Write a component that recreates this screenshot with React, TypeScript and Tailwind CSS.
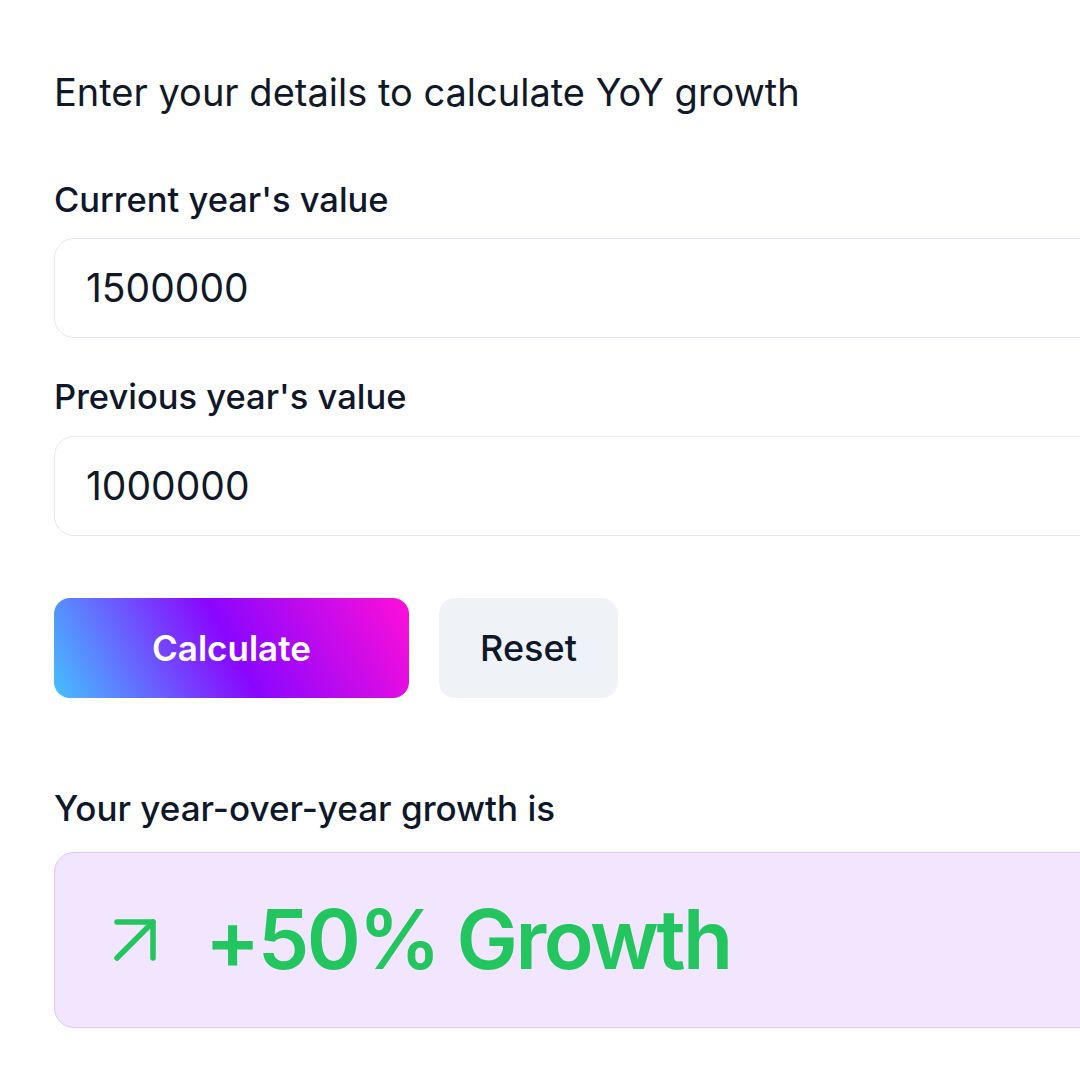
import React from "react";

function ArrowUpRight() {
  return (
    <svg width="44" height="44" viewBox="0 0 44 44" fill="none" className="shrink-0">
      <path d="M4 40 L40 4" stroke="#22c55e" strokeWidth="5.5" strokeLinecap="round" />
      <path d="M4 4 H40 V40" stroke="#22c55e" strokeWidth="5.5" strokeLinecap="round" strokeLinejoin="round" />
    </svg>
  );
}

export default function App() {
  return (
    <div
      className="w-[1080px] h-[1080px] overflow-hidden bg-white text-[#0f172a]"
      style={{ fontFamily: "Inter, 'Noto Sans', sans-serif" }}
    >
      <div className="w-[1200px] pl-[54px] pt-[68px] flex flex-col">
        <h1 className="text-[38px] leading-[48px] font-normal text-[#111827]">
          Enter your details to calculate YoY growth
        </h1>

        <label className="mt-[64px] text-[34.5px] leading-[40px] font-medium">
          Current year's value
        </label>
        <div className="mt-[18px] h-[100px] rounded-[20px] border border-[#e2e8f0] flex items-center px-[31px] text-[39px] text-[#111827]">
          1500000
        </div>

        <label className="mt-[39px] text-[34.5px] leading-[40px] font-medium">
          Previous year's value
        </label>
        <div className="mt-[19px] h-[100px] rounded-[20px] border border-[#e2e8f0] flex items-center px-[31px] text-[39px] text-[#111827]">
          1000000
        </div>

        <div className="mt-[62px] flex gap-[30px]">
          <button className="w-[355px] h-[100px] rounded-[16px] bg-[linear-gradient(62deg,#45c0ff_0%,#8a06ff_50%,#ff0fd8_100%)] text-white text-[35px] font-semibold">
            Calculate
          </button>
          <button className="w-[179px] h-[100px] rounded-[16px] bg-[#eff2f7] text-[#0f172a] text-[36px] font-medium">
            Reset
          </button>
        </div>

        <p className="mt-[90px] text-[35px] leading-[40px] font-medium">
          Your year-over-year growth is
        </p>
        <div className="mt-[24px] h-[176px] rounded-[20px] border-[1.5px] border-[#dcc6fc] bg-[#f1e6fe] flex items-center pl-[58px] gap-[48px]">
          <ArrowUpRight />
          <span className="text-[82px] leading-none font-semibold tracking-[-0.03em] text-[#22c55e]">
            +50% Growth
          </span>
        </div>
      </div>
    </div>
  );
}
